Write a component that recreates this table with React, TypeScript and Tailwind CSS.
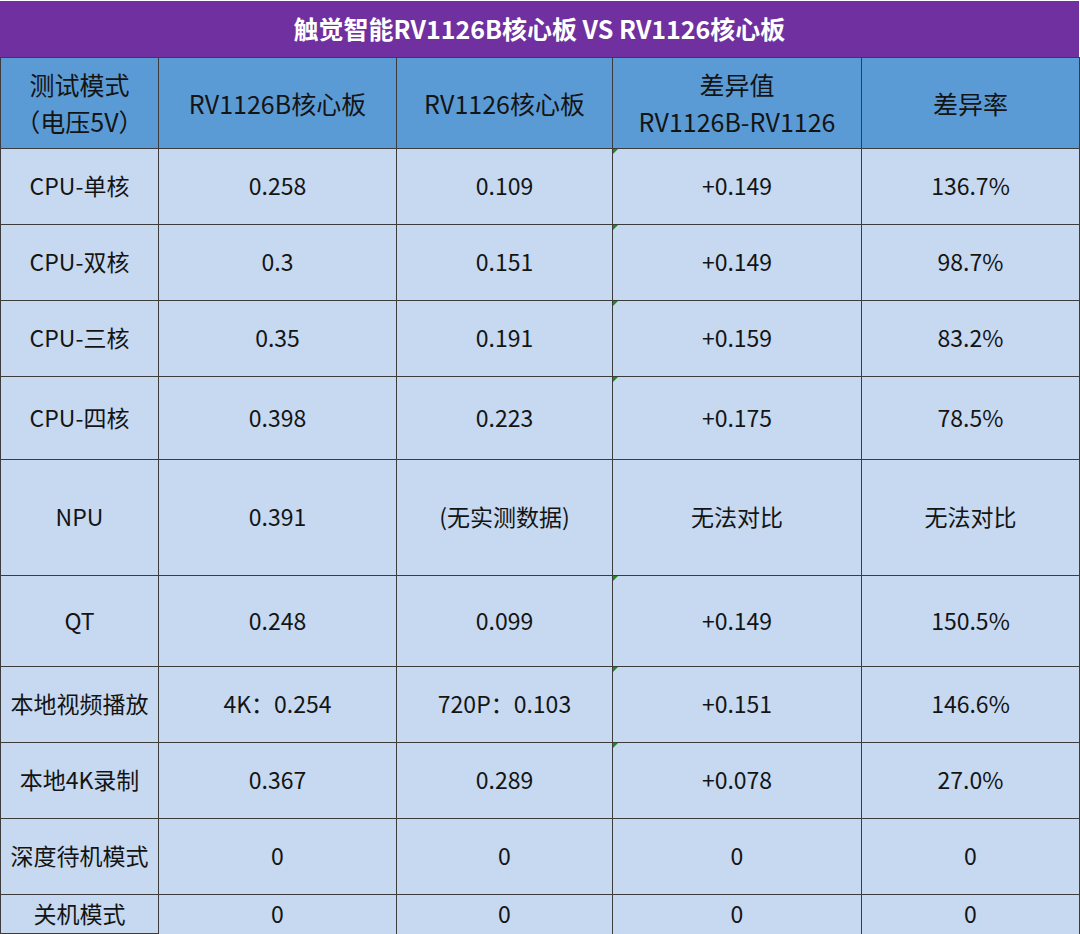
const COLUMN_TEMPLATE = 'grid-cols-[157px_237px_215px_248px_217px]'

type Row = {
  mode: string
  newBoard: string
  oldBoard: string
  diff: string
  rate: string
  height: string
  flagged: boolean
}

const rows: Row[] = [
  { mode: 'CPU-单核', newBoard: '0.258', oldBoard: '0.109', diff: '+0.149', rate: '136.7%', height: 'h-[75px]', flagged: true },
  { mode: 'CPU-双核', newBoard: '0.3', oldBoard: '0.151', diff: '+0.149', rate: '98.7%', height: 'h-[75px]', flagged: true },
  { mode: 'CPU-三核', newBoard: '0.35', oldBoard: '0.191', diff: '+0.159', rate: '83.2%', height: 'h-[75px]', flagged: true },
  { mode: 'CPU-四核', newBoard: '0.398', oldBoard: '0.223', diff: '+0.175', rate: '78.5%', height: 'h-[82px]', flagged: true },
  { mode: 'NPU', newBoard: '0.391', oldBoard: '(无实测数据)', diff: '无法对比', rate: '无法对比', height: 'h-[115px]', flagged: false },
  { mode: 'QT', newBoard: '0.248', oldBoard: '0.099', diff: '+0.149', rate: '150.5%', height: 'h-[90px]', flagged: true },
  { mode: '本地视频播放', newBoard: '4K：0.254', oldBoard: '720P：0.103', diff: '+0.151', rate: '146.6%', height: 'h-[75px]', flagged: true },
  { mode: '本地4K录制', newBoard: '0.367', oldBoard: '0.289', diff: '+0.078', rate: '27.0%', height: 'h-[75px]', flagged: true },
  { mode: '深度待机模式', newBoard: '0', oldBoard: '0', diff: '0', rate: '0', height: 'h-[75px]', flagged: false },
  { mode: '关机模式', newBoard: '0', oldBoard: '0', diff: '0', rate: '0', height: 'h-[38px]', flagged: false },
]

// Excel's "number stored as text" marker in the top-left corner of a cell
function TextNumberFlag() {
  return (
    <span className="absolute left-0 top-0 h-0 w-0 border-l-[5px] border-b-[5px] border-l-[#1e8a1e] border-b-transparent" />
  )
}

function Cell({ children, flagged = false }: { children: React.ReactNode; flagged?: boolean }) {
  return (
    <div className="relative flex items-center justify-center bg-[#c6d9f0] pb-[2px] text-center">
      {flagged && <TextNumberFlag />}
      {children}
    </div>
  )
}

function HeadCell({ children, className = '' }: { children: React.ReactNode; className?: string }) {
  return (
    <div className={`flex flex-col items-center justify-center bg-[#5b9bd5] text-[25px] leading-[37px] ${className}`}>
      {children}
    </div>
  )
}

export default function App() {
  return (
    <div
      className="w-[1080px] bg-white text-[23px] leading-[37px] text-[#141414]"
      style={{ fontFamily: '"Noto Sans CJK SC", "Noto Sans", sans-serif' }}
    >
      <div className="mt-px flex h-[56px] w-[1079px] items-center justify-center bg-[#7030a0] pb-[2px] text-[25px] font-bold text-white">
        触觉智能RV1126B核心板 VS RV1126核心板
      </div>

      <div className={`grid ${COLUMN_TEMPLATE} gap-px bg-[#3c3c3c] p-px`}>
        <HeadCell className="h-[90px]">
          <span>测试模式</span>
          <span>（电压5V）</span>
        </HeadCell>
        <HeadCell>RV1126B核心板</HeadCell>
        <HeadCell>RV1126核心板</HeadCell>
        <HeadCell>
          <span>差异值</span>
          <span>RV1126B-RV1126</span>
        </HeadCell>
        <HeadCell>差异率</HeadCell>

        {rows.map((row) => (
          <div key={row.mode} className="contents">
            <div className={`flex ${row.height} items-center justify-center bg-[#c6d9f0] pb-[2px]`}>{row.mode}</div>
            <Cell>{row.newBoard}</Cell>
            <Cell>{row.oldBoard}</Cell>
            <Cell flagged={row.flagged}>{row.diff}</Cell>
            <Cell>{row.rate}</Cell>
          </div>
        ))}
      </div>
    </div>
  )
}
